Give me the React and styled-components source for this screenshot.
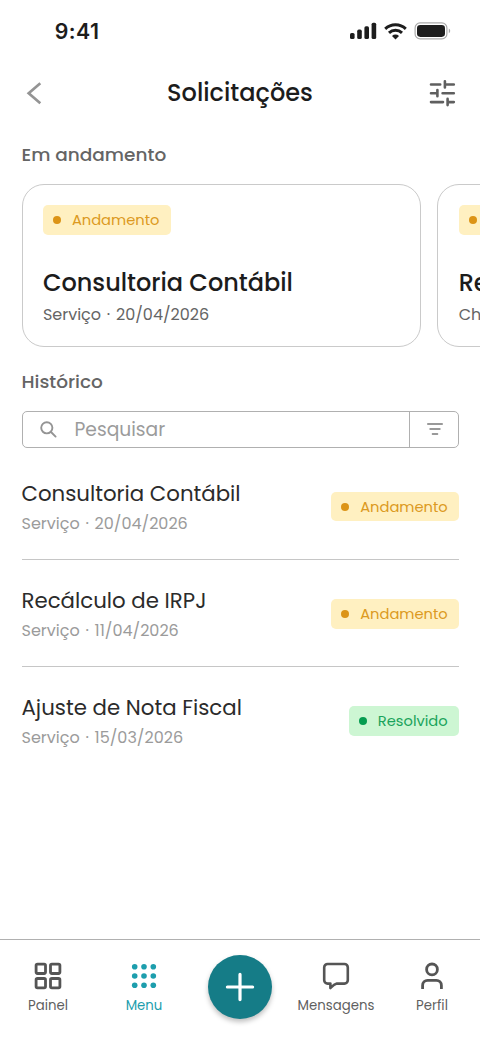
import React from "react";
import styled, { createGlobalStyle } from "styled-components";

const GlobalStyle = createGlobalStyle`
  * { box-sizing: border-box; }
  body {
    margin: 0;
    background: #fff;
    font-family: Poppins, Inter, sans-serif;
  }
`;

const statusColors = {
  progress: { background: "#fff0c1", dot: "#dc9417", text: "#dc9a22" },
  solved: { background: "#cdf6d3", dot: "#069c50", text: "#1aa35b" }
};

const Screen = styled.div`
  width: 480px;
  height: 1040px;
  display: flex;
  flex-direction: column;
  overflow: hidden;
  background: #fff;
  white-space: nowrap;
`;

const StatusBar = styled.div`
  height: 62px;
  padding: 0 29.4px 0 54.7px;
  display: flex;
  align-items: center;
  justify-content: space-between;
`;

const Time = styled.span`
  font-family: Inter, sans-serif;
  font-size: 21.3px;
  font-weight: 600;
  letter-spacing: 0.5px;
  color: #1d1d1d;
`;

const StatusIcons = styled.div`
  display: flex;
  align-items: center;
  gap: 7px;
`;

const Header = styled.header`
  height: 62px;
  padding: 0 22.5px 0 22.5px;
  display: grid;
  grid-template-columns: 30px 1fr 30px;
  align-items: center;
`;

const IconButton = styled.button`
  display: flex;
  padding: 0;
  border: 0;
  background: none;
`;

const Title = styled.h1`
  margin: 0;
  text-align: center;
  font-size: 24px;
  font-weight: 500;
  line-height: 36px;
  color: #1c1c1c;
`;

const SectionTitle = styled.h2`
  margin: ${p => p.$top}px 0 15px 21.5px;
  font-size: 18.5px;
  font-weight: 500;
  line-height: 28px;
  color: #656565;
`;

const Cards = styled.div`
  display: flex;
  gap: 16.5px;
  padding-left: 21.5px;
`;

const Card = styled.article`
  flex: none;
  width: 399.3px;
  height: 163px;
  padding: 20px 20.4px;
  border: 1.3px solid #cacaca;
  border-radius: 22px;
  display: flex;
  flex-direction: column;
  align-items: flex-start;
`;

const CardTitle = styled.h3`
  margin: 30px 0 0;
  font-size: 24px;
  font-weight: 500;
  line-height: 36px;
  color: #1c1c1c;
`;

const CardMeta = styled.p`
  margin: 2px 0 0;
  font-size: 16px;
  line-height: 24px;
  word-spacing: 1.5px;
  color: #656565;
`;

const Badge = styled.span`
  flex: none;
  height: 29.5px;
  padding: 0 11.3px 0 10px;
  display: flex;
  align-items: center;
  gap: 11px;
  border-radius: 5px;
  font-size: 14.7px;
  line-height: 22px;
  background: ${p => statusColors[p.$status].background};
  color: ${p => statusColors[p.$status].text};

  &::before {
    content: "";
    width: 8px;
    height: 8px;
    border-radius: 50%;
    background: ${p => statusColors[p.$status].dot};
  }
`;

const BadgeLabel = styled.span`
  padding-top: 1px;
`;

const Search = styled.div`
  margin: 0 21px 5px 21.5px;
  height: 37px;
  flex: none;
  display: flex;
  border: 1.3px solid #b0b0b0;
  border-radius: 5px;
`;

const SearchField = styled.div`
  flex: 1;
  display: flex;
  align-items: center;
  gap: 17px;
  padding-left: 16px;
  font-size: 18.7px;
  color: #9b9b9b;
`;

const SearchFilter = styled.div`
  width: 49px;
  padding: 0 0 1px 1px;
  display: flex;
  align-items: center;
  justify-content: center;
  border-left: 1.3px solid #b0b0b0;
`;

const List = styled.ul`
  flex: 1;
  margin: 0 21px 0 21.5px;
  padding: 0;
  list-style: none;
`;

const Item = styled.li`
  height: 106.4px;
  display: flex;
  align-items: center;
  justify-content: space-between;

  & + & {
    height: 107px;
    border-top: 1px solid #c6c6c6;
  }

  ${Badge} {
    margin-top: 1px;
  }
`;

const ItemTitle = styled.h3`
  margin: 0;
  font-size: 21.3px;
  font-weight: 400;
  line-height: 33px;
  color: #2b2b2b;
`;

const ItemMeta = styled.p`
  margin: 2px 0 0;
  font-size: 16px;
  line-height: 24px;
  word-spacing: 1.5px;
  color: #9b9b9b;
`;

const TabBar = styled.nav`
  height: 101px;
  flex: none;
  display: grid;
  grid-template-columns: repeat(5, 96px);
  border-top: 1.3px solid #b0b0b0;
`;

const Tab = styled.a`
  display: flex;
  flex-direction: column;
  align-items: center;
  padding-top: 20px;
  font-size: 13.3px;
  line-height: 20px;
  color: ${p => (p.$active ? "#1d9ead" : "#5f5f5f")};

  svg {
    margin-bottom: 4px;
  }
`;

const AddButton = styled.button`
  width: 64px;
  height: 64px;
  margin: 14.7px auto 0;
  padding: 0;
  display: flex;
  align-items: center;
  justify-content: center;
  border: 0;
  border-radius: 50%;
  background: #157c87;
  box-shadow: 0 3px 5px rgba(0, 0, 0, 0.25);
`;

const SignalIcon = () => (
  <svg width="27" height="18" fill="#1d1d1d">
    <rect x="0" y="11" width="4.6" height="6" rx="1.6" />
    <rect x="7.2" y="7.6" width="4.6" height="9.4" rx="1.6" />
    <rect x="14.4" y="4.3" width="4.6" height="12.7" rx="1.6" />
    <rect x="21.6" y="0.7" width="4.6" height="16.3" rx="1.6" />
  </svg>
);

const WifiIcon = () => (
  <svg width="23" height="17" viewBox="0 0 23 17">
    <g fill="none" stroke="#1d1d1d" strokeWidth="2.9">
      <path d="M1.2 5.9a14.8 14.8 0 0 1 20.6 0" />
      <path d="M5 9.9a9.3 9.3 0 0 1 13 0" />
    </g>
    <path d="M8 13a5 5 0 0 1 7 0l-3.5 3.6z" fill="#1d1d1d" />
  </svg>
);

const BatteryIcon = () => (
  <svg width="37" height="18">
    <rect x="1.1" y="0.9" width="31.8" height="16" rx="5" fill="none" stroke="#aaa" strokeWidth="1.2" />
    <rect x="3" y="2.9" width="28" height="12" rx="3.3" fill="#1d1d1d" />
    <path d="M34.8 6.6v4.6c1.9-.8 1.9-3.8 0-4.6z" fill="#aaa" />
  </svg>
);

const BackIcon = () => (
  <svg width="24" height="26" fill="none" stroke="#949494" strokeWidth="2.7">
    <path d="M17.3 3.2 5.7 13.3l11.6 10" />
  </svg>
);

const TuneIcon = () => (
  <svg width="30" height="28" fill="none" stroke="#5f5f5f" strokeWidth="2.6" strokeLinecap="round">
    <path d="M3 5.5h9.2M16.9 2.3v6.2M16.9 5.5h8.9" />
    <path d="M3 14.3h6.4M9.4 11.1v6.2M14.6 14.3h11.2" />
    <path d="M3 23.1h12M19.6 19.9v6.2M19.6 23.1h6.2" />
  </svg>
);

const SearchIcon = () => (
  <svg width="19" height="19" fill="none" stroke="#949494" strokeWidth="1.9" strokeLinecap="round">
    <circle cx="7.8" cy="7.8" r="5.6" />
    <path d="M12 12l4.6 4.6" />
  </svg>
);

const FilterIcon = () => (
  <svg width="18" height="14" fill="none" stroke="#999" strokeWidth="1.8" strokeLinecap="round">
    <path d="M1.9 2h14.2M4.2 7h9.6M6.6 12h4.8" />
  </svg>
);

const PanelIcon = () => (
  <svg width="32" height="32" fill="none" stroke="#555" strokeWidth="2.8">
    <rect x="4.1" y="4.1" width="9.4" height="9.4" rx="1.4" />
    <rect x="18.5" y="4.1" width="9.4" height="9.4" rx="1.4" />
    <rect x="4.1" y="18.5" width="9.4" height="9.4" rx="1.4" />
    <rect x="18.5" y="18.5" width="9.4" height="9.4" rx="1.4" />
  </svg>
);

const MenuIcon = () => (
  <svg width="32" height="32" fill="#1d9ead">
    {[6.7, 16, 25.3].map(y =>
      [6.7, 16, 25.3].map(x => <circle key={`${x}-${y}`} cx={x} cy={y} r="2.8" />)
    )}
  </svg>
);

const MessageIcon = () => (
  <svg width="32" height="32" fill="none" stroke="#555" strokeWidth="2.6" strokeLinejoin="round">
    <path d="M7.6 4h16.8a3.4 3.4 0 0 1 3.4 3.4v12.8a3.4 3.4 0 0 1-3.4 3.4h-7.6c-2.8.6-4.6 2.6-6.4 4.4v-4.4H7.6a3.4 3.4 0 0 1-3.4-3.4V7.4A3.4 3.4 0 0 1 7.6 4z" />
  </svg>
);

const ProfileIcon = () => (
  <svg width="32" height="32" fill="none" stroke="#555" strokeWidth="2.8">
    <circle cx="16" cy="9.4" r="5.4" />
    <path d="M6.6 29v-3.6a5 5 0 0 1 5-5h8.8a5 5 0 0 1 5 5V29" />
  </svg>
);

const PlusIcon = () => (
  <svg width="32" height="32" stroke="#fff" strokeWidth="3.2" strokeLinecap="round">
    <path d="M16 3.4v25.2M3.4 16h25.2" />
  </svg>
);

const cards = [
  { title: "Consultoria Contábil", meta: "Serviço · 20/04/2026" },
  { title: "Recálculo de IRPJ", meta: "Chamado · 11/04/2026" }
];

const history = [
  { title: "Consultoria Contábil", meta: "Serviço · 20/04/2026", status: "progress" },
  { title: "Recálculo de IRPJ", meta: "Serviço · 11/04/2026", status: "progress" },
  { title: "Ajuste de Nota Fiscal", meta: "Serviço · 15/03/2026", status: "solved" }
];

const StatusBadge = ({ status }) => (
  <Badge $status={status}>
    <BadgeLabel>{status === "solved" ? "Resolvido" : "Andamento"}</BadgeLabel>
  </Badge>
);

export default function App() {
  return (
    <>
      <GlobalStyle />
      <Screen>
        <StatusBar>
          <Time>9:41</Time>
          <StatusIcons>
            <SignalIcon />
            <WifiIcon />
            <BatteryIcon />
          </StatusIcons>
        </StatusBar>
        <Header>
          <IconButton aria-label="Voltar">
            <BackIcon />
          </IconButton>
          <Title>Solicitações</Title>
          <IconButton aria-label="Filtros">
            <TuneIcon />
          </IconButton>
        </Header>

        <SectionTitle $top={17}>Em andamento</SectionTitle>
        <Cards>
          {cards.map(card => (
            <Card key={card.title}>
              <StatusBadge status="progress" />
              <CardTitle>{card.title}</CardTitle>
              <CardMeta>{card.meta}</CardMeta>
            </Card>
          ))}
        </Cards>

        <SectionTitle $top={21}>Histórico</SectionTitle>
        <Search>
          <SearchField>
            <SearchIcon />
            Pesquisar
          </SearchField>
          <SearchFilter>
            <FilterIcon />
          </SearchFilter>
        </Search>
        <List>
          {history.map(item => (
            <Item key={item.title}>
              <div>
                <ItemTitle>{item.title}</ItemTitle>
                <ItemMeta>{item.meta}</ItemMeta>
              </div>
              <StatusBadge status={item.status} />
            </Item>
          ))}
        </List>

        <TabBar>
          <Tab>
            <PanelIcon />
            Painel
          </Tab>
          <Tab $active>
            <MenuIcon />
            Menu
          </Tab>
          <AddButton aria-label="Adicionar">
            <PlusIcon />
          </AddButton>
          <Tab>
            <MessageIcon />
            Mensagens
          </Tab>
          <Tab>
            <ProfileIcon />
            Perfil
          </Tab>
        </TabBar>
      </Screen>
    </>
  );
}
